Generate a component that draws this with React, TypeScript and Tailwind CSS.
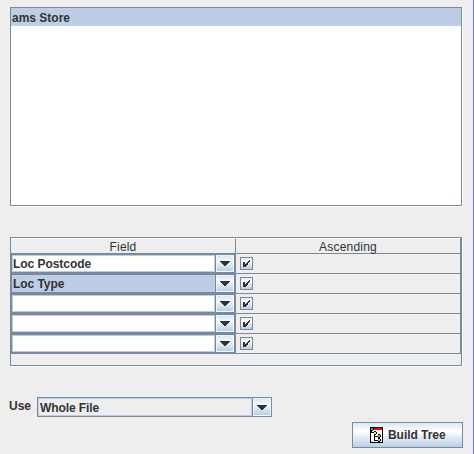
const rows = ['Loc Postcode', 'Loc Type', '', '', ''];

function Arrow() {
  return (
    <svg width="10" height="5" viewBox="0 0 10 5" shapeRendering="crispEdges" className="block">
      <path d="M0 0h10v1H0zM1 1h8v1H1zM2 2h6v1H2zM3 3h4v1H3zM4 4h2v1H4z" fill="#333" />
    </svg>
  );
}

function ArrowButton() {
  return (
    <div className="flex h-full w-[18px] shrink-0 items-center justify-center border border-white/70 bg-linear-to-b from-[#dde8f3] via-[#f4f8fc] via-35% to-[#b8cfe5]">
      <Arrow />
    </div>
  );
}

function Check() {
  return (
    <div className="h-[13px] w-[13px] border border-[#7a8a9e] bg-linear-to-b from-[#e2ebf4] via-white via-30% to-[#bccde5]">
      <svg width="11" height="11" viewBox="0 0 11 11" shapeRendering="crispEdges" className="block">
        <path d="M2 4h2v5H2zM4 6h1v3H4zM5 5h1v3H5zM6 4h1v3H6zM7 3h1v2H7zM8 2h1v2H8z" fill="#333" />
      </svg>
    </div>
  );
}

function TreeIcon() {
  return (
    <svg width="13" height="16" viewBox="0 0 13 16" shapeRendering="crispEdges" className="block">
      <path d="M0 0h13v16H0z" fill="#000" />
      <path d="M1 1h11v14H1z" fill="#fff" />
      <path d="M4 1h8v2H4z" fill="#f00" />
      <path d="M1 3h2v1H1zM3 1h1v2H3zM1 4h1v1h2v1H1zM4 4h2v1H4zM6 5h1v2H6zM4 7h2v1H4zM4 8h1v1h3v1H4zM4 10h1v3h3v1H4zM8 7h2v1H8zM10 8h1v2h-1zM8 10h2v1H8zM8 11h2v1H8zM10 12h1v2h-1zM8 14h2v1H8z" fill="#000" />
      <path d="M1 1h2v2H1z" fill="#1cb5a5" />
      <path d="M4 5h2v2H4z" fill="#ee0" />
      <path d="M8 8h2v2H8z" fill="#4b8" />
      <path d="M8 12h2v2H8z" fill="#f88" />
    </svg>
  );
}

export default function App() {
  return (
    <div className="h-[454px] w-[474px] overflow-hidden border-r border-[#6382bf] bg-[#eee] pt-[7px] pl-[10px] font-['Liberation_Sans',Arial,sans-serif] text-[12px] text-[#333]">
      <div className="h-[199px] w-[452px] border border-[#7a8a9e] bg-white shadow-[1px_1px_0_#fff]">
        <div className="h-[18px] bg-[#bccde5] pl-px leading-[20px] font-bold">
          <span className="tracking-[0px]">ams Store</span>
        </div>
      </div>

      <div className="mt-[31px] h-[129px] w-[452px] border border-[#7a8a9e] shadow-[1px_1px_0_#fff]">
        <div className="flex h-[16px] border-b border-[#7a8a9e] text-center leading-[16px]">
          <div className="w-[225px] border-t border-r border-t-white border-r-[#7a8a9e]">
            <span className="tracking-[0.2px]">Field</span>
          </div>
          <div className="w-[225px] border-t border-r border-t-white border-r-[#7a8a9e]">
            <span className="tracking-[0.2px]">Ascending</span>
          </div>
        </div>
        {rows.map((name, i) => (
          <div key={i} className="flex h-[20px] w-[450px] border-r border-b border-[#7a8a9e]">
            <div className="flex h-[19px] w-[225px] shrink-0 border border-r-2 border-[#7a8a9e]">
              <div
                className={`w-[203px] border border-[#bccde5] leading-[16px] font-bold whitespace-nowrap ${i === 1 ? 'bg-[#bccde5]' : 'bg-white'}`}
              >
                <span className="tracking-[-0.05px]">{name}</span>
              </div>
              <div className="w-px bg-[#7a8a9e]" />
              <ArrowButton />
            </div>
            <div className="pt-[3px] pl-[4px]">
              <Check />
            </div>
          </div>
        ))}
      </div>

      <div className="mt-[31px] flex h-[20px] font-bold">
        <div className="-ml-px w-[28px] leading-[19px]">Use</div>
        <div className="flex w-[235px] border border-[#7a8a9e]">
          <div className="w-[214px] border border-[#bccde5] pl-px leading-[18px]">
            <span className="tracking-[-0.1px]">Whole File</span>
          </div>
          <div className="w-px bg-[#7a8a9e]" />
          <ArrowButton />
        </div>
      </div>

      <div className="mt-[5px] ml-[342px] flex h-[26px] w-[111px] items-center border border-[#7a8a9e] bg-linear-to-b from-[#dde8f3] via-white via-35% to-[#b8cfe5] pl-[17px] font-bold">
        <TreeIcon />
        <span className="ml-[5px] tracking-[-0.05px] whitespace-nowrap">Build Tree</span>
      </div>
    </div>
  );
}
